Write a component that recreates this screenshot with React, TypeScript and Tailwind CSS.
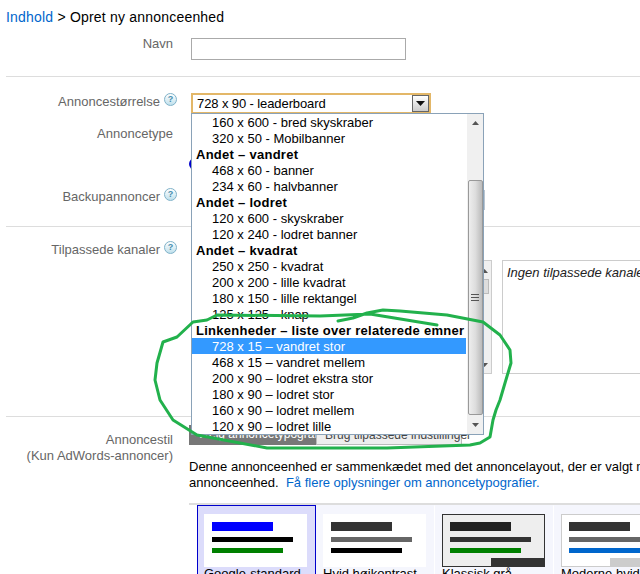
const rows: [string, boolean?, boolean?][] = [
  ["160 x 600 - bred skyskraber"],
  ["320 x 50 - Mobilbanner"],
  ["Andet – vandret", true],
  ["468 x 60 - banner"],
  ["234 x 60 - halvbanner"],
  ["Andet – lodret", true],
  ["120 x 600 - skyskraber"],
  ["120 x 240 - lodret banner"],
  ["Andet – kvadrat", true],
  ["250 x 250 - kvadrat"],
  ["200 x 200 - lille kvadrat"],
  ["180 x 150 - lille rektangel"],
  ["125 x 125 - knap"],
  ["Linkenheder – liste over relaterede emner", true],
  ["728 x 15 – vandret stor", false, true],
  ["468 x 15 – vandret mellem"],
  ["200 x 90 – lodret ekstra stor"],
  ["180 x 90 – lodret stor"],
  ["160 x 90 – lodret mellem"],
  ["120 x 90 – lodret lille"],
];

function Help() {
  return (
    <span className="ml-[4px] mt-[-1px] flex h-[13px] w-[13px] shrink-0 items-center justify-center rounded-full border border-[#7fb2c9] bg-gradient-to-b from-white to-[#bfe0ec] text-[9px] font-bold leading-none text-[#4a8fb0]">
      ?
    </span>
  );
}

function Label({ text, help, className = "" }: { text: string; help?: boolean; className?: string }) {
  return (
    <div className={`flex w-[171px] shrink-0 justify-end whitespace-nowrap text-[#666666] ${help ? "" : "pr-[4px]"} ${className}`}>
      <span className="leading-[16px]">{text}</span>
      {help ? <Help /> : null}
    </div>
  );
}

function Card({
  label,
  outer,
  inner,
  a,
  b,
  c,
  corner,
}: {
  label: string;
  outer: string;
  inner: string;
  a: string;
  b: string;
  c: string;
  corner?: string;
}) {
  return (
    <div className={`h-[80px] w-[119px] shrink-0 border px-[6px] pt-[8px] ${outer}`}>
      <div className={`relative h-[53px] w-[103px] ${inner}`}>
        <div className={`h-[9px] w-[61px] ${a}`} />
        <div className={`mt-[6px] h-[5px] w-[81px] ${b}`} />
        <div className={`mt-[6px] h-[5px] w-[71px] ${c}`} />
        {corner ? <div className={`absolute bottom-0 right-0 h-[8px] w-[53px] ${corner}`} /> : null}
      </div>
      <div className="mt-[-1px] whitespace-nowrap leading-[16px] text-black">{label}</div>
    </div>
  );
}

export default function App() {
  return (
    <div className="relative h-[574px] w-[640px] overflow-hidden bg-white font-['Liberation_Sans',Arial,sans-serif] text-[13px] text-black">
      <div className="h-[37px] pl-[6px] pt-[9px] text-[14px] leading-[16px] tracking-[0.2px]">
        <span className="text-[#0066cc]">Indhold</span> &gt; Opret ny annonceenhed
      </div>

      <div className="ml-[6px] flex h-[40px] border-b border-[#dddddd]">
        <Label text="Navn" className="mt-[-1px]" />
        <div className="ml-[14px] mt-[1px] h-[22px] w-[215px] border border-[#aaaaaa]" />
      </div>

      <div className="ml-[6px] h-[150px] border-b border-[#dddddd]">
        <div className="flex pt-[17px]">
          <Label text="Annoncestørrelse" help />
        </div>
        <div className="flex pt-[16px]">
          <Label text="Annoncetype" />
        </div>
        <div className="ml-[183px] mt-[16px] h-[12px] w-[6px] rounded-l-full bg-[#0000cc]" />
        <div className="flex pt-[19px]">
          <Label text="Backupannoncer" help />
        </div>
      </div>

      <div className="ml-[6px] flex h-[190px] border-b border-[#dddddd]">
        <Label text="Tilpassede kanaler" help className="pt-[15px]" />
        <div className="mt-[33px] flex h-[114px] w-[315px] shrink-0 justify-end">
          <div className="relative h-full w-[12px] border border-[#cccccc] bg-[#f0f0f0]">
            <svg className="absolute left-0 top-[8px]" width="7" height="4" viewBox="0 0 7 4"><path d="M3.5 0L7 4H0z" fill="#555" /></svg>
            <div className="absolute left-0 top-[18px] h-[15px] w-[8px] border border-[#bbbbbb] bg-[#dddddd]" />
            <svg className="absolute left-0 top-[102px]" width="7" height="4" viewBox="0 0 7 4"><path d="M0 0h7L3.5 4z" fill="#555" /></svg>
          </div>
        </div>
        <div className="ml-[10px] mt-[33px] h-[114px] w-[160px] shrink-0 overflow-hidden whitespace-nowrap border border-[#cccccc] pl-[4px] pt-[4px] italic leading-[16px] text-[#222222]">
          Ingen tilpassede kanaler
        </div>
      </div>

      <div className="ml-[6px] flex pt-[8px]">
        <div className="mt-[7px] w-[167px] shrink-0 whitespace-nowrap text-right leading-[16px] text-[#666666]">
          <div>Annoncestil</div>
          <div>(Kun AdWords-annoncer)</div>
        </div>
        <div className="ml-[16px] min-w-0 flex-1">
          <div className="flex h-[20px] whitespace-nowrap text-[12px] leading-[18px]">
            <div className="w-[127px] bg-[#777777] pl-[8px] text-white">Vælg annoncetypografi</div>
            <div className="w-[146px] border border-[#bbbbbb] bg-[#eeeeee] pl-[8px] text-[#444444]">
              Brug tilpassede indstillinger
            </div>
          </div>
          <div className="mt-[14px] w-[470px] leading-[16px]">
            <div className="whitespace-nowrap">Denne annonceenhed er sammenkædet med det annoncelayout, der er valgt n</div>
            <div className="whitespace-nowrap">
              annonceenhed.&nbsp; <span className="text-[#0066cc]">Få flere oplysninger om annoncetypografier.</span>
            </div>
          </div>
          <div className="mt-[12px] flex w-[500px] border-t-2 border-[#dddddd] pl-[8px]">
            <Card label="Google-standard" outer="border-[#0000cc] bg-[#dcdcfb]" inner="bg-white pl-[8px] pt-[8px]" a="bg-[#0000ff]" b="bg-black" c="bg-[#008000]" />
            <Card label="Hvid højkontrast" outer="border-[#f5f6fd] border-r-white bg-[#f5f6fd]" inner="bg-white pl-[8px] pt-[8px]" a="bg-[#333333]" b="bg-[#666666]" c="bg-black" />
            <Card label="Klassisk grå" outer="border-[#f5f6fd] border-r-white bg-[#f5f6fd]" inner="border border-[#333333] bg-[#eeeeee] pl-[7px] pt-[7px]" a="bg-[#222222]" b="bg-[#333333]" c="bg-[#008000]" corner="bg-[#333333]" />
            <Card label="Moderne hvid" outer="border-[#f5f6fd] border-r-white bg-[#f5f6fd]" inner="border border-[#cccccc] bg-white pl-[7px] pt-[7px]" a="bg-[#333333]" b="bg-[#666666]" c="bg-[#0066cc]" corner="bg-[#cccccc]" />
          </div>
        </div>
      </div>

      {/* sliver of the backup control that shows past the open list */}
      <div className="absolute left-[483px] top-[190px] h-[20px] w-[2px] bg-[#b8c4d0]" />

      {/* open select: control */}
      <div className="absolute left-[191px] top-[93px] flex h-[21px] w-[240px] items-center justify-between border-2 border-[#e3b768] bg-white pl-[4px] leading-[16px]">
        <span className="tracking-[-0.1px]">728 x 90 - leaderboard</span>
        <span className="flex h-[17px] w-[17px] items-center justify-center border border-[#666666] bg-gradient-to-b from-white to-[#cccccc]">
          <svg width="9" height="5" viewBox="0 0 9 5"><path d="M0 0h9L4.5 5z" fill="#111" /></svg>
        </span>
      </div>

      {/* open select: list */}
      <div className="absolute left-[191px] top-[113px] flex h-[322px] w-[293px] border border-[#8aa2b8] bg-white">
        <div className="w-[275px] shrink-0">
          {rows.map(([t, bold, sel]) => (
            <div
              key={t}
              className={`h-[16px] w-[274px] whitespace-nowrap leading-[18px] ${bold ? "pl-[4px] font-bold tracking-[0.27px]" : "pl-[20px]"} ${sel ? "bg-[#3399ff] text-white" : ""}`}
            >
              {t}
            </div>
          ))}
        </div>
        <div className="flex w-[16px] flex-col items-center bg-[#f0f0f0]">
          <div className="flex h-[66px] w-full justify-center pt-[7px]">
            <svg width="7" height="4" viewBox="0 0 7 4"><path d="M3.5 0L7 4H0z" fill="#555" /></svg>
          </div>
          <div className="flex h-[235px] w-[15px] items-center justify-center rounded-[2px] border border-[#999999] bg-gradient-to-r from-[#eeeeee] via-[#dddddd] to-[#bbbbbb]">
            <svg width="8" height="8" viewBox="0 0 8 8"><path d="M0 .5h8M0 3.5h8M0 6.5h8" stroke="#555" /></svg>
          </div>
          <div className="flex w-full justify-center pt-[8px]">
            <svg width="7" height="4" viewBox="0 0 7 4"><path d="M0 0h7L3.5 4z" fill="#555" /></svg>
          </div>
        </div>
      </div>

      {/* hand-drawn annotation */}
      <svg className="pointer-events-none absolute left-0 top-0" width="640" height="574" viewBox="0 0 640 574" fill="none">
        <path
          d="M338 321L353 318L367 313L383 310L400 311L447 315L483 322L500 335L510 350L511 363L505 383L500 400L496 410L493 420L490 437L480 443L470 445L387 448L320 448L267 448L197 435L173 420L160 400L155 380L157 363L163 342L177 337L193 322L207 320L217 315L320 316L370 314L437 325"
          stroke="#22b14c"
          strokeWidth="3"
          strokeLinecap="round"
          strokeLinejoin="round"
        />
      </svg>
    </div>
  );
}
